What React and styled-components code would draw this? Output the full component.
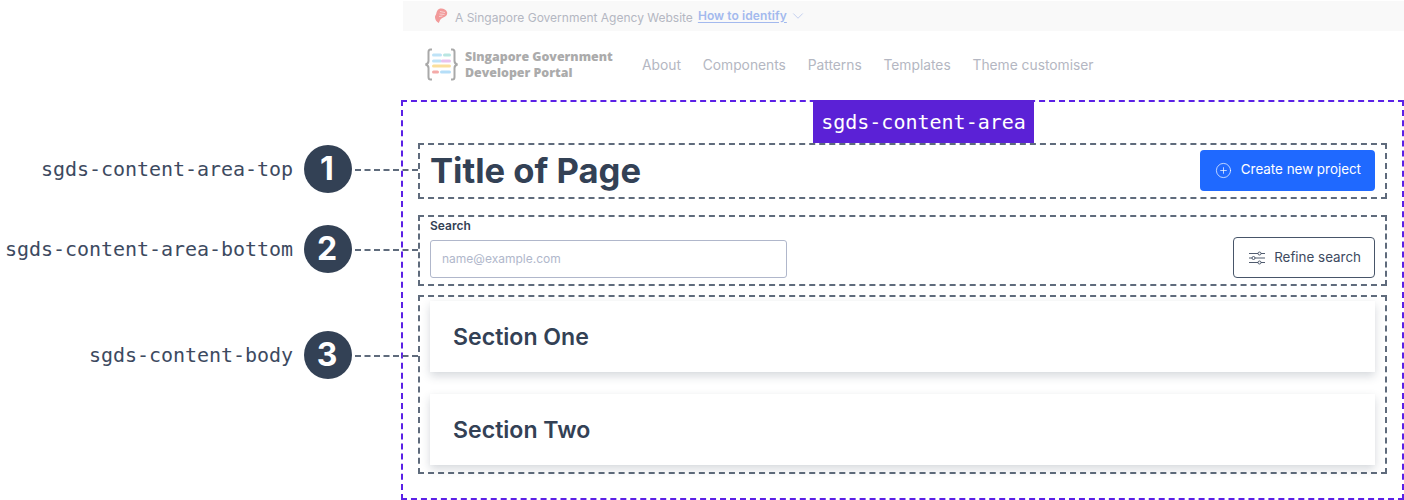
import React from "react";
import styled, { createGlobalStyle } from "styled-components";
import { ChevronDown, CirclePlus } from "lucide-react";

const Global = createGlobalStyle`
  html, body { margin: 0; padding: 0; background: #fff; }
  body { font-family: Inter, "Liberation Sans", sans-serif; color: #334155; overflow: hidden; }
  * { box-sizing: border-box; }
`;

const Page = styled.div`
  display: flex;
  width: 1404px;
  height: 500px;
`;
const Callouts = styled.div`
  position: relative;
  z-index: 1;
  width: 402px;
  flex: none;
  padding-top: 145px;
  display: flex;
  flex-direction: column;
`;
const Callout = styled.div`
  display: flex;
  align-items: center;
  height: 48px;
  width: 418px;
  margin-top: ${(p) => p.$gap}px;
`;
const CalloutLabel = styled.span`
  width: 293px;
  flex: none;
  text-align: right;
  font: 400 20px/24px "DejaVu Sans Mono", "Liberation Mono", monospace;
  letter-spacing: -0.04px;
  color: #3d4a5f;
`;
const Badge = styled.span`
  width: 48px;
  height: 48px;
  margin-left: 11px;
  padding-right: 2px;
  flex: none;
  border-radius: 50%;
  background: #334155;
  color: #fff;
  display: flex;
  align-items: center;
  justify-content: center;
  font: 700 32px/1 Inter, sans-serif;
`;
const Leader = styled.span`
  flex: 1;
  border-top: 2px dashed #5f6b7c;
  margin: 2px 0 0 3px;
`;
const Preview = styled.div`
  flex: 1;
  min-width: 0;
  display: flex;
  flex-direction: column;
`;
const Masthead = styled.div`
  height: 31px;
  margin: 0 0 0 1px;
  border-top: 1px solid #fff;
  background: #f9f9f9;
  display: flex;
  align-items: center;
  padding-left: 31px;
  font-size: 12px;
  color: #b4b7c2;
`;
const MastText = styled.span`
  margin-left: 7px;
  position: relative;
  top: 1px;
`;
const MastLink = styled.a`
  margin-left: 5px;
  font-weight: 600;
  color: #a3b9ee;
  text-decoration: underline;
  text-underline-offset: 2px;
  letter-spacing: 0.08px;
  position: relative;
  top: -1px;
`;
const MastCaret = styled(ChevronDown)`
  margin-left: 2px;
  color: #a9bbe9;
`;
const Nav = styled.div`
  height: 69px;
  display: flex;
  align-items: center;
  padding: 0 0 2px 22px;
`;
const Brand = styled.div`
  display: flex;
  align-items: center;
  width: 218px;
  flex: none;
`;
const BrandName = styled.div`
  margin-left: 6px;
  font: 800 12.4px/15.5px "Open Sans", "Noto Sans", sans-serif;
  color: #ababab;
`;
const BrandLine = styled.div`
  white-space: nowrap;
`;
const NavLinks = styled.div`
  display: flex;
  gap: 21.8px;
  font-size: 13.8px;
  color: #b4b7c2;
`;
const Area = styled.div`
  flex: 1;
  margin-left: -1px;
  border: 2px dashed #5b21e6;
  padding: 0 15px;
  display: flex;
  flex-direction: column;
  align-items: stretch;
`;
const AreaTag = styled.div`
  align-self: center;
  height: 43px;
  margin: -2px 0 0 42px;
  padding: 0 8px;
  background: #5b21d6;
  color: #fff;
  display: flex;
  align-items: center;
  font: 400 20px/1 "DejaVu Sans Mono", "Liberation Mono", monospace;
`;
const Region = styled.div`
  border: 2px dashed #5f6b7c;
  padding: ${(p) => p.$pad};
  margin-top: ${(p) => p.$top}px;
  display: ${(p) => (p.$row ? "flex" : "block")};
  justify-content: space-between;
  align-items: ${(p) => p.$align || "center"};
  height: ${(p) => p.$h}px;
  flex: none;
`;
const Title = styled.h1`
  margin: 0;
  font-size: 34.6px;
  line-height: 40px;
  font-weight: 700;
  color: #334155;
`;
const Button = styled.button`
  height: 41px;
  display: flex;
  align-items: center;
  gap: 9px;
  border-radius: 4px;
  font: 400 13.4px/1 Inter, sans-serif;
  padding: ${(p) => (p.$primary ? "0 14px 0 15px" : "0 13px 0 15px")};
  margin-top: ${(p) => p.$top || 0}px;
  background: ${(p) => (p.$primary ? "#1f69ff" : "#fff")};
  color: ${(p) => (p.$primary ? "#fff" : "#3d4a5f")};
  border: ${(p) => (p.$primary ? "none" : "1px solid #475569")};
`;
const Field = styled.div`
  display: flex;
  flex-direction: column;
`;
const FieldLabel = styled.label`
  font-size: 12px;
  font-weight: 600;
  line-height: 14px;
  margin-bottom: 7px;
  color: #334155;
`;
const Input = styled.div`
  width: 357px;
  height: 38px;
  border: 1px solid #b0b7cb;
  border-radius: 3px;
  padding: 0 11px 2px;
  display: flex;
  align-items: center;
  font-size: 12px;
  color: #b0b7cb;
`;
const Card = styled.section`
  height: 71px;
  background: #fff;
  padding-left: 23px;
  display: flex;
  align-items: center;
  margin-top: ${(p) => p.$top}px;
  box-shadow: 0 4px 9px rgba(51, 65, 85, 0.2), 0 0 2px rgba(51, 65, 85, 0.02);
  font-size: 23.1px;
  font-weight: 600;
  color: #334155;
`;

const Lion = () => (
  <svg width="14" height="16" viewBox="0 0 14 16">
    <path
      d="M5 1c3-1.200 7 .2 8 3 .7 2.200-.6 4-2.600 5-1.600.8-3.400 1.500-4.400 3.200L4.800 15C2.600 13.800.8 11.400 1 8.800 1.200 7.500 2 7 2.300 5.600 2.600 3.800 3.300 1.800 5 1z"
      fill="#f29a9a"
    />
    <path d="M6 3.500l5 1M5.500 6l5 .5M5 8.500l3.500-.5" stroke="#f9f9f9" strokeWidth="0.6" fill="none" />
  </svg>
);

const Logo = () => (
  <svg width="35" height="33" viewBox="0 0 35 33">
    <path
      d="M8 1.500H6.500C5 1.500 4.500 2.500 4.500 4v9c0 2-1 3-3 3.500 2 .5 3 1.500 3 3.500v9c0 1.500.5 2.500 2 2.500H8M27 1.500h1.500c1.500 0 2 1 2 2.500v9c0 2 1 3 3 3.500-2 .5-3 1.500-3 3.500v9c0 1.500-.5 2.500-2 2.500H27"
      fill="none"
      stroke="#a9a9a9"
      strokeWidth="2"
    />
    <rect x="8" y="5.500" width="10" height="3" rx="1.500" fill="#bfe3f7" />
    <rect x="19" y="5.500" width="8" height="3" rx="1.500" fill="#b9e6e2" />
    <rect x="8" y="11.500" width="10" height="3" rx="1.500" fill="#bfe3f7" />
    <rect x="17" y="11.500" width="10" height="3" rx="1.500" fill="#e9c3ef" />
    <rect x="8" y="16.500" width="19" height="3" rx="1.500" fill="#fbdf9c" />
    <rect x="8" y="22.500" width="7" height="3" rx="1.500" fill="#f4aaa8" />
    <rect x="16" y="22.500" width="11" height="3" rx="1.500" fill="#b5def8" />
  </svg>
);

const Sliders = () => (
  <svg width="16" height="14" viewBox="0 0 16 14" fill="none" stroke="#3d4a5f" strokeWidth="0.9">
    <path d="M0 2.500h9M12 2.500h4M0 7h3M6 7h10M0 11.500h9M12 11.500h4" />
    <circle cx="10.500" cy="2.500" r="1.500" />
    <circle cx="4.500" cy="7" r="1.500" />
    <circle cx="10.500" cy="11.500" r="1.500" />
  </svg>
);

export default function App() {
  return (
    <Page>
      <Global />
      <Callouts>
        <Callout $gap={0}>
          <CalloutLabel>sgds-content-area-top</CalloutLabel>
          <Badge>1</Badge>
          <Leader />
        </Callout>
        <Callout $gap={32}>
          <CalloutLabel>sgds-content-area-bottom</CalloutLabel>
          <Badge>2</Badge>
          <Leader />
        </Callout>
        <Callout $gap={58}>
          <CalloutLabel>sgds-content-body</CalloutLabel>
          <Badge>3</Badge>
          <Leader />
        </Callout>
      </Callouts>
      <Preview>
        <Masthead>
          <Lion />
          <MastText>A Singapore Government Agency Website</MastText>
          <MastLink>How to identify</MastLink>
          <MastCaret size={18} strokeWidth={0.9} />
        </Masthead>
        <Nav>
          <Brand>
            <Logo />
            <BrandName>
              <BrandLine>Singapore Government</BrandLine>
              <BrandLine>Developer Portal</BrandLine>
            </BrandName>
          </Brand>
          <NavLinks>
            <span>About</span>
            <span>Components</span>
            <span>Patterns</span>
            <span>Templates</span>
            <span>Theme customiser</span>
          </NavLinks>
        </Nav>
        <Area>
          <AreaTag>sgds-content-area</AreaTag>
          <Region $row $top={0} $h={56} $pad="0 10px 2px">
            <Title>Title of Page</Title>
            <Button $primary>
              <CirclePlus size={17} strokeWidth={1} />
              Create new project
            </Button>
          </Region>
          <Region $row $top={16} $h={71} $pad="2px 10px 0" $align="flex-start">
            <Field>
              <FieldLabel>Search</FieldLabel>
              <Input>name@example.com</Input>
            </Field>
            <Button $top={18}>
              <Sliders />
              Refine search
            </Button>
          </Region>
          <Region $top={9} $h={179} $pad="4px 10px">
            <Card $top={0}>Section One</Card>
            <Card $top={22}>Section Two</Card>
          </Region>
        </Area>
      </Preview>
    </Page>
  );
}
